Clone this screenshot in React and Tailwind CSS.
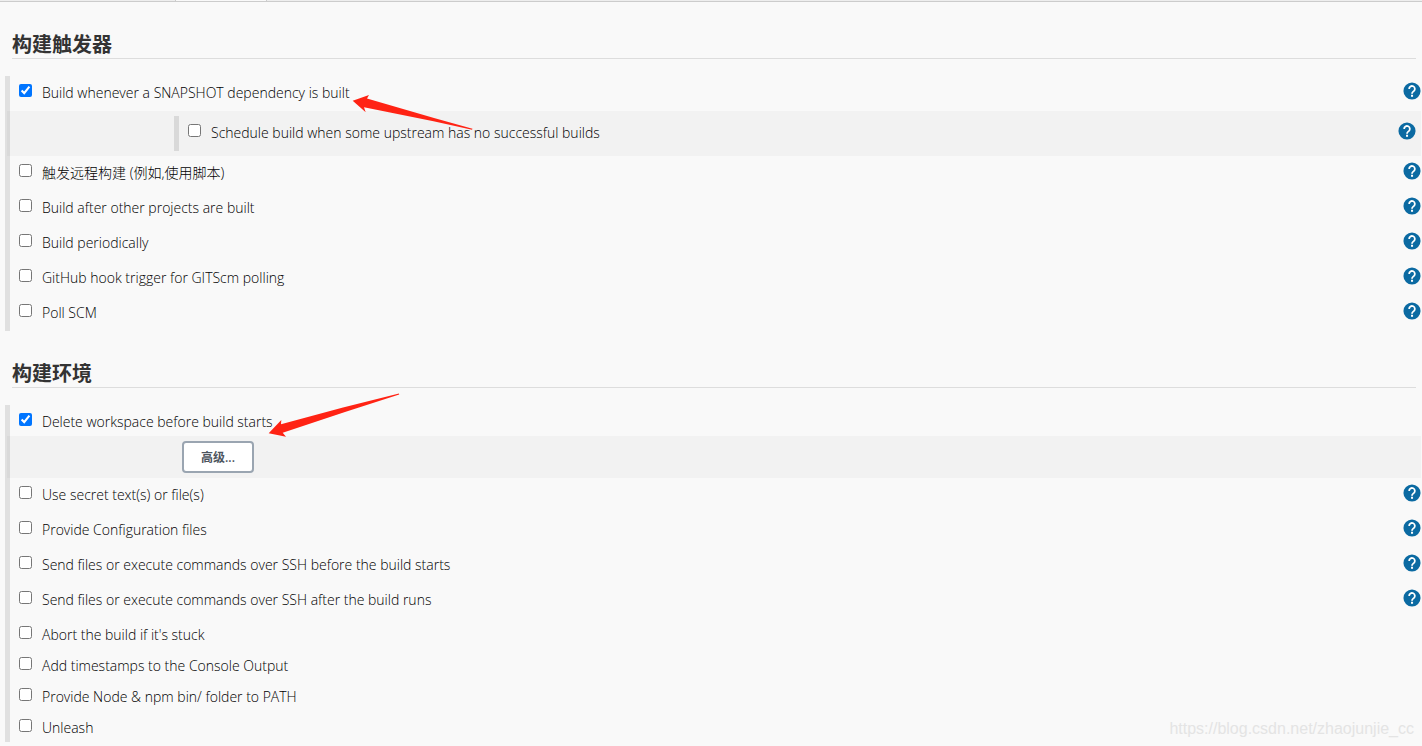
import React from 'react';

const triggers = [
    { id: 'remote', label: '触发远程构建 (例如,使用脚本)', help: true },
    { id: 'after-projects', label: 'Build after other projects are built', help: true },
    { id: 'periodically', label: 'Build periodically', help: true },
    { id: 'github-hook', label: 'GitHub hook trigger for GITScm polling', help: true },
    { id: 'poll-scm', label: 'Poll SCM', help: true }
];

const environment = [
    { id: 'secrets', label: 'Use secret text(s) or file(s)', help: true },
    { id: 'config-files', label: 'Provide Configuration files', help: true },
    { id: 'ssh-before', label: 'Send files or execute commands over SSH before the build starts', help: true },
    { id: 'ssh-after', label: 'Send files or execute commands over SSH after the build runs', help: true },
    { id: 'abort-stuck', label: "Abort the build if it's stuck" },
    { id: 'timestamps', label: 'Add timestamps to the Console Output' },
    { id: 'node-path', label: 'Provide Node & npm bin/ folder to PATH' },
    { id: 'unleash', label: 'Unleash' }
];

const HelpButton = ({ label }) => (
    <button type="button" aria-label={`Help for feature: ${label}`} className="mt-[6px] h-[18px] w-[18px] shrink-0">
        <svg viewBox="0 0 24 24" className="h-[18px] w-[18px]">
            <circle cx="12" cy="12" r="11.4" fill="#0b6aa2" />
            <path d="M8.2 9.2a3.8 3.8 0 1 1 6.2 2.9c-1.4 1.1-2.4 1.6-2.4 3.4" fill="none" stroke="#fff" strokeWidth="2.4" />
            <rect x="10.7" y="17" width="2.7" height="2.7" fill="#fff" />
        </svg>
    </button>
);

const OptionRow = ({ id, label, help, checked }) => (
    <div className={`flex items-start justify-between ${help ? 'h-[35px]' : 'h-[31px]'}`}>
        <div className="flex items-start pl-[9px]">
            <input id={id} type="checkbox" defaultChecked={checked} className="mt-2 h-[13px] w-[13px]" />
            <label htmlFor={id} className="mt-[7px] pl-[10px] text-sm leading-5 font-light whitespace-nowrap text-black">
                {label}
            </label>
        </div>
        {help && <HelpButton label={label} />}
    </div>
);

const SectionHeader = ({ children }) => (
    <h2 className="ml-3 mr-[6px] border-b border-[#dddddd] text-xl leading-[27px] font-bold">{children}</h2>
);

const App = () => {
    return (
        <div className="relative min-h-screen overflow-hidden bg-[#f9f9f9] font-['Open_Sans','Noto_Sans_CJK_SC',sans-serif] text-[#333333]">
            {/* Bottom edge of the tab bar */}
            <div className="h-[2px] border-b border-[#cccccc] bg-[#eeeeee] pl-[175px]">
                <div className="h-px w-[92px] border-x border-[#cccccc] bg-[#f9f9f9]"></div>
            </div>

            <main className="pt-[29px]">
                <section className="mb-[29px]">
                    <SectionHeader>构建触发器</SectionHeader>
                    <div className="mt-[17px] ml-[5px] mr-px border-l-[5px] border-[#e0e0e0]">
                        <OptionRow id="snapshot" label="Build whenever a SNAPSHOT dependency is built" help checked />
                        <div className="-ml-[3px] bg-black/[0.028] py-[5px] pr-[5px] pl-[167px]">
                            <div className="border-l-[5px] border-[#d9d9d9]">
                                <OptionRow id="upstream" label="Schedule build when some upstream has no successful builds" help />
                            </div>
                        </div>
                        {triggers.map((item) => (
                            <OptionRow key={item.id} {...item} />
                        ))}
                    </div>
                </section>

                <section>
                    <SectionHeader>构建环境</SectionHeader>
                    <div className="mt-[17px] ml-[5px] mr-px border-l-[5px] border-[#e0e0e0]">
                        <OptionRow id="delete-workspace" label="Delete workspace before build starts" checked />
                        <div className="-ml-[3px] bg-black/[0.028] py-[5px] pl-[175px]">
                            <button type="button" className="block h-8 w-[72px] rounded-[4px] border-2 border-[#9aa5b1] bg-white pt-[2px] text-xs font-semibold text-[#4d545d]">
                                高级...
                            </button>
                        </div>
                        {environment.map((item) => (
                            <OptionRow key={item.id} {...item} />
                        ))}
                    </div>
                </section>
            </main>

            {/* Red pointer arrows */}
            <svg aria-hidden="true" width="500" height="450" className="pointer-events-none absolute top-0 left-0" fill="#ff2314">
                <path d="M352.7 100.7 369 95l-2 3.4 67 19.6 38.5 10.8-.5 1-38.5-8.6-69.500-13.900 1.700 5z" />
                <path d="M268.7 433.3 281.3 420l-.3 4.2 62-16.700 56-14 .2 1-54.200 17.500-62.300 20.700 3.300 4z" />
            </svg>

            <div className="absolute right-[8px] bottom-[7px] font-['Liberation_Sans',Arial,sans-serif] text-base leading-5 text-[#e4e4e4]">
                https://blog.csdn.net/zhaojunjie_cc
            </div>
        </div>
    );
};

export default App;
